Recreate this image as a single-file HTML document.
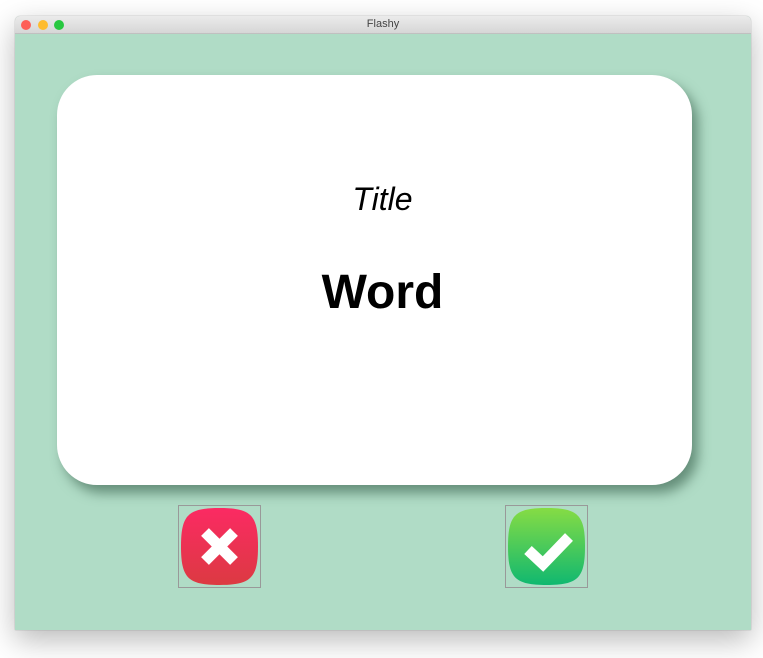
<!DOCTYPE html>
<html><head><style>
html,body{margin:0;padding:0;width:763px;height:658px;background:#fff;overflow:hidden;font-family:"Liberation Sans",sans-serif;}
.win{position:absolute;left:15px;top:16px;width:736px;height:614px;background:#b0dcc6;border-radius:5px 5px 0 0;box-shadow:0 10px 30px rgba(0,0,0,.28),0 0 1px rgba(0,0,0,.4);overflow:hidden;}
.tb{position:absolute;left:0;top:0;width:736px;height:17px;background:linear-gradient(#ebebeb,#d6d6d6);border-bottom:1px solid #c0c0c0;text-align:center;font-size:11px;line-height:17px;color:#444;}
.d{position:absolute;top:4px;width:10px;height:10px;border-radius:50%;}
.card{position:absolute;left:42px;top:59px;width:635px;height:410px;background:#fff;border-radius:40px;box-shadow:6px 8px 12px rgba(60,100,80,.65);}
.t{position:absolute;left:8px;width:100%;text-align:center;}
.btn{position:absolute;top:489px;width:83px;height:83px;border:1px solid #999;box-sizing:border-box;}
svg{display:block;margin:0;}
</style></head><body>
<div class="win">
<div class="tb">Flashy
<div class="d" style="left:6px;background:#fe5f57"></div>
<div class="d" style="left:23px;background:#febc2e"></div>
<div class="d" style="left:39px;background:#28c840"></div>
</div>
<div class="card">
<div class="t" style="top:106px;font-size:32px;font-style:italic;">Title</div>
<div class="t" style="top:190px;font-size:48px;font-weight:bold;">Word</div>
</div>
<div class="btn" style="left:163px">
<svg width="81" height="81" viewBox="0 0 81 81"><defs><linearGradient id="r" x1="0" y1="0" x2="0" y2="1"><stop offset="0" stop-color="#fb2a63"/><stop offset="1" stop-color="#dc3a42"/></linearGradient></defs>
<path d="M40.5 2C72 2 79 9 79 40.5S72 79 40.5 79 2 72 2 40.5 9 2 40.5 2Z" fill="url(#r)"/>
<path d="M26 26L55 55M55 26L26 55" stroke="#fff" stroke-width="11"/></svg></div>
<div class="btn" style="left:490px">
<svg width="81" height="81" viewBox="0 0 81 81"><defs><linearGradient id="g" x1="0" y1="0" x2="0" y2="1"><stop offset="0" stop-color="#86dc44"/><stop offset="1" stop-color="#10b870"/></linearGradient></defs>
<path d="M40.5 2C72 2 79 9 79 40.5S72 79 40.5 79 2 72 2 40.5 9 2 40.5 2Z" fill="url(#g)"/>
<path d="M22 44L37 58L63 31" stroke="#fff" stroke-width="11" fill="none"/></svg></div>
</div>
</body></html>
